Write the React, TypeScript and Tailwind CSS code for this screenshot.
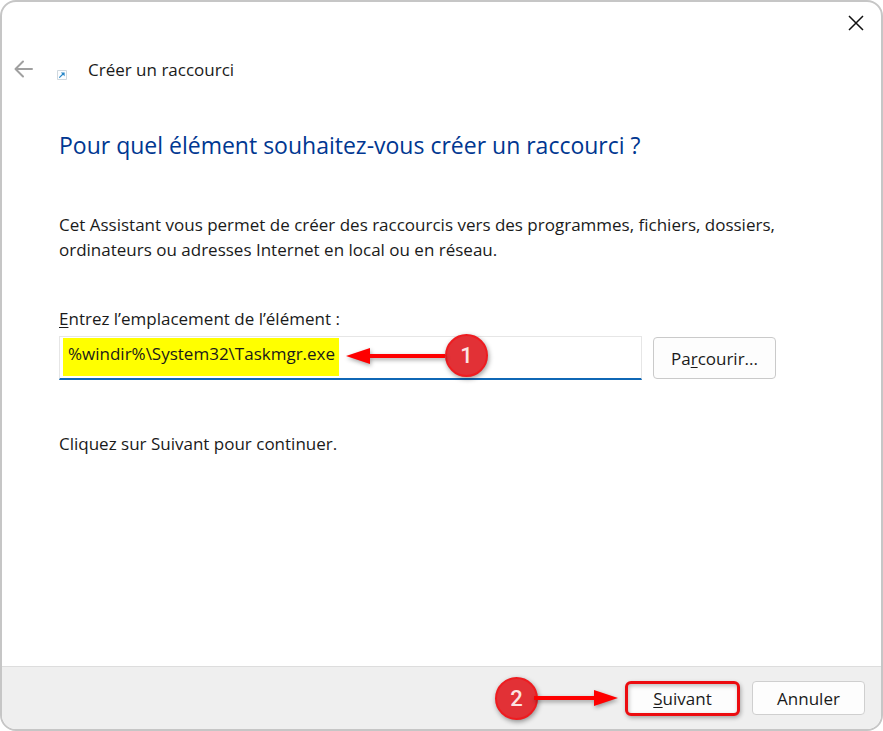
import { useState } from "react";

function Step({ value }: { value: number }) {
    return (
        <span className="flex h-[43px] w-[43px] shrink-0 items-center justify-center rounded-full border-2 border-[#ee1c20] bg-[#e23136] font-['Roboto',sans-serif] text-[22px] font-medium text-[#fbe4e2] shadow-[1px_2px_5px_rgba(0,0,0,0.4)]">
            {value}
        </span>
    );
}

function ArrowLeft() {
    return (
        <svg width="99" height="18" viewBox="0 0 99 18" className="drop-shadow-[1px_2px_2px_rgba(0,0,0,0.35)]" aria-hidden="true">
            <path d="M0 9 24 1V7H99V11H24V17Z" fill="#fe0000" />
        </svg>
    );
}

function ArrowRight() {
    return (
        <svg width="84" height="18" viewBox="0 0 84 18" className="-ml-1 drop-shadow-[1px_2px_2px_rgba(0,0,0,0.35)]" aria-hidden="true">
            <path d="M84 9 60 1V7H0V11H60V17Z" fill="#fe0000" />
        </svg>
    );
}

export default function App() {
    const [location, setLocation] = useState("%windir%\\System32\\Taskmgr.exe");

    return (
        <div className="flex min-h-screen flex-col overflow-hidden rounded-2xl border-2 border-[#c6c6c6] bg-white font-['Open_Sans','Noto_Sans',sans-serif] text-[17px] leading-[25px] text-[#1a1a1a]">
            <div className="flex h-[41px] items-center justify-end pr-[15px]">
                <button type="button" aria-label="Fermer" className="p-0.5">
                    <svg width="16" height="16" viewBox="0 0 16 16" fill="none" stroke="#111" strokeWidth="1.5" aria-hidden="true">
                        <path d="M1 1 15 15M15 1 1 15" />
                    </svg>
                </button>
            </div>

            <header className="flex h-[52px] items-center pl-3">
                <button type="button" aria-label="Retour">
                    <svg width="20" height="18" viewBox="0 0 20 18" fill="none" stroke="#a0a0a0" strokeWidth="2" strokeLinecap="round" strokeLinejoin="round" aria-hidden="true">
                        <path d="M18 9H1.5M9 1.5 1.5 9 9 16.5" />
                    </svg>
                </button>
                <svg width="10" height="10" viewBox="0 0 10 10" className="mt-3 ml-[23px]" fill="none" aria-hidden="true">
                    <path d="M.5.5H9.5V9.5H.5Z" fill="#fbfdff" stroke="#d0d8de" />
                    <path d="M2.3 7.7 6.5 3.5" stroke="#2585c7" strokeWidth="1.2" />
                    <path d="M3.8 2.4H7.6V6.2Z" fill="#2585c7" />
                </svg>
                <span className="ml-[21px]">Créer un raccourci</span>
            </header>

            <main className="flex-1 px-[57px] pt-[34px] pb-10">
                <h1 className="text-[23px] leading-8 text-[#003791]">Pour quel élément souhaitez-vous créer un raccourci ?</h1>

                <p className="mt-[51px] max-w-[730px]">
                    Cet Assistant vous permet de créer des raccourcis vers des programmes, fichiers, dossiers, ordinateurs ou adresses Internet en local ou en réseau.
                </p>

                <label htmlFor="location" className="mt-11 block">
                    <u className="underline-offset-2">E</u>ntrez l’emplacement de l’élément :
                </label>
                <div className="mt-[5px] flex max-w-[717px] items-center gap-[11px]">
                    <div className="relative h-11 flex-1 border border-b-2 border-[#e6e6e6] border-b-[#0f67b5] pt-px pl-[3px]">
                        <input
                            id="location"
                            type="text"
                            value={location}
                            onChange={(e) => setLocation(e.target.value)}
                            className="block h-[38px] w-[276px] bg-[#ffff00] pb-2 pl-[5px] outline-none"
                        />
                        <div className="absolute -top-[3px] left-[286px] flex items-center">
                            <ArrowLeft />
                            <Step value={1} />
                        </div>
                    </div>
                    <button type="button" className="h-[42px] w-[123px] rounded border border-[#cacaca] bg-[#fdfdfd]">
                        Pa<u className="underline-offset-2">r</u>courir...
                    </button>
                </div>

                <p className="mt-[51px]">Cliquez sur Suivant pour continuer.</p>
            </main>

            <footer className="flex h-[63px] items-center justify-end border-t border-[#dddddd] bg-[#efefef] pr-4">
                <Step value={2} />
                <ArrowRight />
                <button type="button" className="ml-[7px] h-[35px] w-[115px] rounded-md border-3 border-[#ec0c10] bg-[#fdfdfd] shadow-[1px_2px_4px_rgba(0,0,0,0.3),inset_1px_2px_4px_rgba(0,0,0,0.25)]">
                    <u className="underline-offset-2">S</u>uivant
                </button>
                <button type="button" className="ml-3 h-[34px] w-[113px] rounded border border-[#cfcfcf] bg-[#fdfdfd]">
                    Annuler
                </button>
            </footer>
        </div>
    );
}
